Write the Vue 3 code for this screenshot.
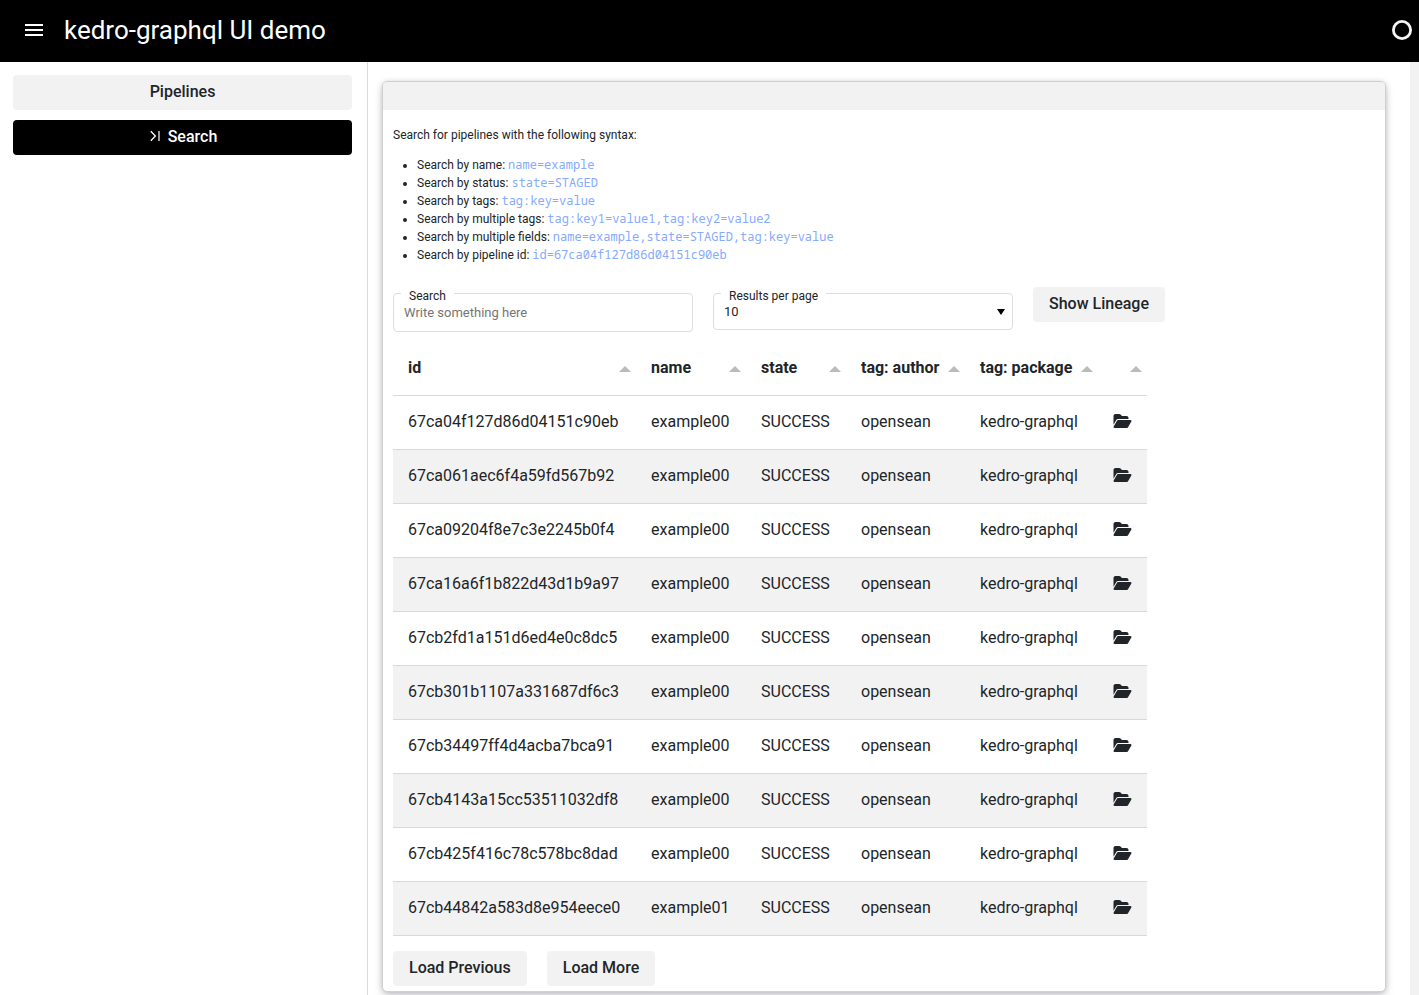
<script setup>
import { ref } from 'vue'

const query = ref('')
const perPage = ref('10')

const syntaxes = [
  { label: 'Search by name:', code: 'name=example' },
  { label: 'Search by status:', code: 'state=STAGED' },
  { label: 'Search by tags:', code: 'tag:key=value' },
  { label: 'Search by multiple tags:', code: 'tag:key1=value1,tag:key2=value2' },
  { label: 'Search by multiple fields:', code: 'name=example,state=STAGED,tag:key=value' },
  { label: 'Search by pipeline id:', code: 'id=67ca04f127d86d04151c90eb' },
]

const columns = [
  { key: 'id', title: 'id' },
  { key: 'name', title: 'name' },
  { key: 'state', title: 'state' },
  { key: 'author', title: 'tag: author' },
  { key: 'package', title: 'tag: package' },
  { key: 'open', title: '' },
]

const row = (id, name = 'example00') => ({
  id,
  name,
  state: 'SUCCESS',
  author: 'opensean',
  package: 'kedro-graphql',
})

const rows = [
  row('67ca04f127d86d04151c90eb'),
  row('67ca061aec6f4a59fd567b92'),
  row('67ca09204f8e7c3e2245b0f4'),
  row('67ca16a6f1b822d43d1b9a97'),
  row('67cb2fd1a151d6ed4e0c8dc5'),
  row('67cb301b1107a331687df6c3'),
  row('67cb34497ff4d4acba7bca91'),
  row('67cb4143a15cc53511032df8'),
  row('67cb425f416c78c578bc8dad'),
  row('67cb44842a583d8e954eece0', 'example01'),
]
</script>

<template>
  <div class="app">
    <header class="topbar">
      <button class="icon-btn" type="button" aria-label="Toggle sidebar">
        <svg width="18" height="12" viewBox="0 0 18 12" fill="#fff">
          <path d="M0 0h18v2H0zM0 5h18v2H0zM0 10h18v2H0z" />
        </svg>
      </button>
      <a class="title" href="#">kedro-graphql UI demo</a>
      <svg class="status" width="20" height="20" viewBox="0 0 20 20">
        <circle cx="10" cy="10" r="8.6" fill="none" stroke="#f5f5f5" stroke-width="2.8" />
      </svg>
    </header>

    <div class="body">
      <nav class="sidebar">
        <button class="btn" type="button">Pipelines</button>
        <button class="btn active" type="button">
          <svg class="tab-icon" width="10" height="12" viewBox="0 0 10 12" fill="none" stroke="#fff">
            <path d="M.8 1.2 5.4 6 .8 10.8" stroke-width="1.3" />
            <path d="M9 1v10" stroke-width="1.2" />
          </svg>
          Search
        </button>
      </nav>

      <main class="main">
        <section class="card">
          <div class="card-header"></div>
          <div class="card-body">
            <p class="intro">Search for pipelines with the following syntax:</p>
            <ul class="syntax">
              <li v-for="s in syntaxes" :key="s.code">{{ s.label }} <code>{{ s.code }}</code></li>
            </ul>

            <form class="filters" @submit.prevent>
              <div class="field">
                <label for="query">Search</label>
                <input id="query" v-model="query" type="text" placeholder="Write something here" />
              </div>
              <div class="field">
                <label for="per-page">Results per page</label>
                <select id="per-page" v-model="perPage">
                  <option>10</option>
                  <option>20</option>
                  <option>50</option>
                </select>
                <svg class="caret" width="8" height="6" viewBox="0 0 8 6"><path d="M0 0h8L4 6z" /></svg>
              </div>
              <button class="btn" type="button">Show Lineage</button>
            </form>

            <table class="grid">
              <colgroup>
                <col v-for="c in columns" :key="c.key" :class="'col-' + c.key" />
              </colgroup>
              <thead>
                <tr>
                  <th v-for="c in columns" :key="c.key" scope="col">
                    <div class="head">
                      <span>{{ c.title }}</span>
                      <svg width="12" height="6" viewBox="0 0 12 6" fill="#bbb"><path d="M6 0l6 6H0z" /></svg>
                    </div>
                  </th>
                </tr>
              </thead>
              <tbody>
                <tr v-for="r in rows" :key="r.id">
                  <td>{{ r.id }}</td>
                  <td>{{ r.name }}</td>
                  <td>{{ r.state }}</td>
                  <td>{{ r.author }}</td>
                  <td>{{ r.package }}</td>
                  <td class="open">
                    <button class="icon-btn" type="button" aria-label="Open pipeline">
                      <svg width="19" height="16" viewBox="0 0 576 512" fill="#212529">
                        <path d="M88.700 223.800L0 375.800V96C0 60.700 28.700 32 64 32H181.500c17 0 33.300 6.700 45.300 18.700l26.500 26.500c12 12 28.300 18.700 45.300 18.700H416c35.300 0 64 28.700 64 64v32H144c-22.800 0-43.800 12.100-55.300 31.800zm27.600 16.100C122.100 230 132.600 224 144 224H544c11.500 0 22 6.100 27.700 16.100s5.700 22.200-.1 32.100l-112 192C453.900 474 443.400 480 432 480H32c-11.500 0-22-6.100-27.700-16.100s-5.700-22.200 .1-32.100l112-192z" />
                      </svg>
                    </button>
                  </td>
                </tr>
              </tbody>
            </table>

            <div class="pager">
              <button class="btn" type="button">Load Previous</button>
              <button class="btn" type="button">Load More</button>
            </div>
          </div>
        </section>
      </main>
    </div>
  </div>
</template>

<style>
body {
  overflow: hidden;
}
</style>

<style scoped>
* {
  box-sizing: border-box;
}

.app {
  display: flex;
  flex-direction: column;
  height: 100vh;
  background: #fff;
  color: #212529;
  font-family: Roboto, "Liberation Sans", sans-serif;
  font-size: 16px;
}

.topbar {
  flex: none;
  display: flex;
  align-items: center;
  height: 62px;
  padding: 0 7px 2px 25px;
  background: #000;
}

.icon-btn {
  display: flex;
  padding: 0;
  border: 0;
  background: none;
  cursor: pointer;
}

.title {
  margin-left: 21px;
  color: #fff;
  font-size: 26px;
  line-height: 36px;
  text-decoration: none;
}

.status {
  margin-left: auto;
}

.body {
  flex: 1;
  display: flex;
  min-height: 0;
}

.sidebar {
  flex: none;
  display: flex;
  flex-direction: column;
  gap: 10px;
  width: 368px;
  padding: 13px 15px 0 13px;
  border-right: 1px solid #d9d9d9;
}

.btn {
  height: 35px;
  padding: 0 16px 2px;
  border: 0;
  border-radius: 4px;
  background: #f2f2f2;
  color: #212529;
  font-family: inherit;
  font-size: 16px;
  font-weight: 500;
  line-height: 24px;
  cursor: pointer;
}

.btn.active {
  background: #000;
  color: #fff;
}

.tab-icon {
  margin: 0 4px 0 2px;
}

.main {
  flex: 1;
  min-width: 0;
  padding: 19px 24px 4px 14px;
  border-right: 9px solid #f2f2f2;
  overflow: hidden;
}

.card {
  border: 1px solid #d0d0d0;
  border-radius: 5px;
  background: #fff;
  box-shadow: rgba(50, 50, 93, 0.15) 0 6px 12px -2px, rgba(0, 0, 0, 0.3) 0 1px 6px -1px;
}

.card-header {
  height: 28px;
  border-radius: 4px 4px 0 0;
  background: #f2f2f2;
}

.card-body {
  padding: 16px 10px 5px;
}

.intro {
  margin: 0;
  font-size: 12px;
  line-height: 18px;
}

.syntax {
  margin: 12px 0 0;
  padding-left: 24px;
  font-size: 12px;
  line-height: 18px;
}

.syntax code {
  color: #85aaff;
  font-family: "Noto Sans Mono", "DejaVu Sans Mono", monospace;
  font-size: 12px;
}

.filters {
  display: flex;
  align-items: flex-start;
  gap: 20px;
  margin-top: 23px;
}

.field {
  position: relative;
  width: 300px;
  margin-top: 6px;
}

.field label {
  position: absolute;
  top: -6px;
  left: 8px;
  padding: 0 8px;
  background: #fff;
  font-size: 12px;
  line-height: 18px;
}

.field input,
.field select {
  display: block;
  width: 100%;
  height: 39px;
  padding: 0 10px;
  border: 1px solid #ddd;
  border-radius: 4px;
  background: #fff;
  color: #212529;
  font-family: inherit;
  font-size: 13px;
  appearance: none;
}

.field select {
  height: 37px;
}

.field input::placeholder {
  color: #757575;
}

.caret {
  position: absolute;
  top: 16px;
  right: 8px;
  pointer-events: none;
}

.grid {
  width: 754px;
  margin-top: 10px;
  border-collapse: separate;
  border-spacing: 0;
  table-layout: fixed;
}

.col-id {
  width: 243px;
}

.col-name {
  width: 110px;
}

.col-state {
  width: 100px;
}

.col-author {
  width: 119px;
}

.col-package {
  width: 133px;
}

.grid th,
.grid td {
  height: 54px;
  padding: 0 0 2px 15px;
  border-bottom: 1px solid #d9d9d9;
  line-height: 24px;
  text-align: left;
  white-space: nowrap;
}

.grid td.open {
  padding-bottom: 4px;
}

.grid th {
  font-weight: 700;
}

.grid tbody tr:nth-child(even) {
  background: #f2f2f2;
}

.head {
  display: flex;
  align-items: center;
  justify-content: space-between;
  padding-right: 5px;
}

.head svg {
  margin-top: 2px;
}

.pager {
  display: flex;
  gap: 20px;
  margin-top: 15px;
}
</style>
